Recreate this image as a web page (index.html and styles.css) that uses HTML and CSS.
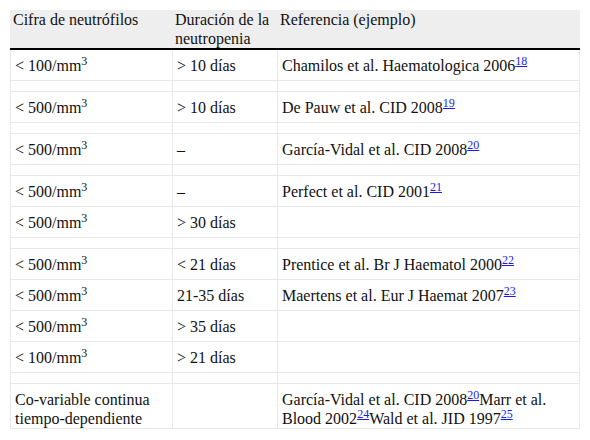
FILE: index.html
```html
<!DOCTYPE html>
<html lang="es">
<head>
<meta charset="utf-8">
<link rel="stylesheet" href="styles.css">
</head>
<body>
<table class="tbl">
  <colgroup>
    <col class="c1"><col class="c2"><col class="c3">
  </colgroup>
  <thead>
    <tr>
      <th>Cifra de neutrófilos</th>
      <th>Duración de la neutropenia</th>
      <th>Referencia (ejemplo)</th>
    </tr>
  </thead>
  <tbody>
    <tr class="row"><td>&lt; 100/mm<sup>3</sup></td><td>&gt; 10 días</td><td>Chamilos et al. Haematologica 2006<sup><a href="#">18</a></sup></td></tr>
    <tr class="gap"><td></td><td></td><td></td></tr>
    <tr class="row"><td>&lt; 500/mm<sup>3</sup></td><td>&gt; 10 días</td><td>De Pauw et al. CID 2008<sup><a href="#">19</a></sup></td></tr>
    <tr class="gap"><td></td><td></td><td></td></tr>
    <tr class="row"><td>&lt; 500/mm<sup>3</sup></td><td>–</td><td>García-Vidal et al. CID 2008<sup><a href="#">20</a></sup></td></tr>
    <tr class="gap"><td></td><td></td><td></td></tr>
    <tr class="row"><td>&lt; 500/mm<sup>3</sup></td><td>–</td><td>Perfect et al. CID 2001<sup><a href="#">21</a></sup></td></tr>
    <tr class="row"><td>&lt; 500/mm<sup>3</sup></td><td>&gt; 30 días</td><td></td></tr>
    <tr class="gap"><td></td><td></td><td></td></tr>
    <tr class="row"><td>&lt; 500/mm<sup>3</sup></td><td>&lt; 21 días</td><td>Prentice et al. Br J Haematol 2000<sup><a href="#">22</a></sup></td></tr>
    <tr class="row"><td>&lt; 500/mm<sup>3</sup></td><td>21-35 días</td><td>Maertens et al. Eur J Haemat 2007<sup><a href="#">23</a></sup></td></tr>
    <tr class="row"><td>&lt; 500/mm<sup>3</sup></td><td>&gt; 35 días</td><td></td></tr>
    <tr class="row"><td>&lt; 100/mm<sup>3</sup></td><td>&gt; 21 días</td><td></td></tr>
    <tr class="gap"><td></td><td></td><td></td></tr>
    <tr class="row last"><td>Co-variable continua tiempo-dependiente</td><td></td><td>García-Vidal et al. CID 2008<sup><a href="#">20</a></sup>Marr et al. Blood 2002<sup><a href="#">24</a></sup>Wald et al. JID 1997<sup><a href="#">25</a></sup></td></tr>
  </tbody>
</table>
</body>
</html>
```
FILE: styles.css
```css
html, body {
  margin: 0;
  padding: 0;
  background: #fff;
}
body {
  padding: 10px;
  font-family: "Liberation Serif", "Times New Roman", serif;
  font-size: 16px;
  color: #111;
}
.tbl {
  border-collapse: collapse;
  width: 569px;
  table-layout: fixed;
}
.c1 { width: 162px; }
.c2 { width: 105px; }
.c3 { width: 302px; }
.tbl th {
  background: #eeeeee;
  font-weight: normal;
  text-align: left;
  vertical-align: top;
  line-height: 19px;
  padding: 0 2px;
  height: 38px;
  border-bottom: 2px solid #000;
  border-left: 1px solid #eeeeee;
  border-right: 1px solid #eeeeee;
}
.tbl td {
  border: 1px solid #e8e8e8;
  line-height: 19px;
  padding: 6px 2px 5px 4px;
  vertical-align: top;
}
.tbl sup {
  font-size: 12px;
  line-height: 0;
  vertical-align: 6px;
}
.tbl sup a {
  color: #1a1aee;
  text-decoration: underline;
}
.gap td {
  height: 10px;
  padding: 0;
}
.last td {
  padding: 6px 2px 0 4px;
}
```
